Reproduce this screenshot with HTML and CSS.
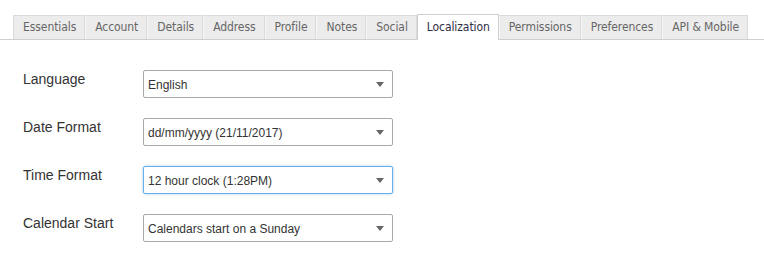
FILE: index.html
```html
<!DOCTYPE html>
<html>
<head>
<meta charset="utf-8">
<link rel="stylesheet" href="styles.css">
</head>
<body>
<div class="tabbar">
  <div class="tab">Essentials</div>
  <div class="tab">Account</div>
  <div class="tab">Details</div>
  <div class="tab">Address</div>
  <div class="tab">Profile</div>
  <div class="tab">Notes</div>
  <div class="tab">Social</div>
  <div class="tab active">Localization</div>
  <div class="tab">Permissions</div>
  <div class="tab">Preferences</div>
  <div class="tab">API &amp; Mobile</div>
</div>
<div class="form">
  <div class="row">
    <div class="label">Language</div>
    <div class="select"><span>English</span><i class="caret"></i></div>
  </div>
  <div class="row">
    <div class="label">Date Format</div>
    <div class="select"><span>dd/mm/yyyy (21/11/2017)</span><i class="caret"></i></div>
  </div>
  <div class="row">
    <div class="label">Time Format</div>
    <div class="select focus"><span>12 hour clock (1:28PM)</span><i class="caret"></i></div>
  </div>
  <div class="row">
    <div class="label">Calendar Start</div>
    <div class="select"><span>Calendars start on a Sunday</span><i class="caret"></i></div>
  </div>
</div>
</body>
</html>
```
FILE: styles.css
```css
html, body {
  margin: 0;
  padding: 0;
  background: #fff;
}
.tabbar {
  display: flex;
  padding: 15px 0 0 13px;
  border-bottom: 1px solid #cfcfcf;
}
.tab {
  white-space: nowrap;
  font-family: "DejaVu Sans Condensed", "DejaVu Sans", sans-serif;
  font-stretch: condensed;
  font-size: 12px;
  letter-spacing: -0.08px;
  line-height: 14px;
  color: #666;
  background: #ececec;
  border: 1px solid #dadada;
  border-bottom: none;
  border-left-color: #f7f7f7;
  padding: 4px 8px 5px 9px;
}
.tab:first-child {
  border-left-color: #dadada;
}
.tab.active {
  background: #fff;
  color: #2e2e44;
  border-color: #cfcfcf;
  margin-top: -1px;
  padding-top: 5px;
  margin-bottom: -1px;
  padding-bottom: 5px;
}
.form {
  display: flex;
  flex-direction: column;
  gap: 20px;
  padding: 30px 0 0 23px;
}
.row {
  display: flex;
  align-items: flex-start;
}
.label {
  width: 120px;
  font-family: "Liberation Sans", Arial, sans-serif;
  font-size: 14px;
  line-height: 16px;
  padding-top: 1px;
  color: #333;
}
.select {
  box-sizing: border-box;
  width: 250px;
  height: 28px;
  border: 1px solid #a9a9a9;
  border-radius: 2px;
  display: flex;
  align-items: center;
  justify-content: space-between;
  padding: 1px 8px 0 4px;
  font-family: "Liberation Sans", Arial, sans-serif;
  font-size: 12px;
  color: #333;
}
.select.focus {
  border-color: #66afe9;
  box-shadow: 0 0 3px rgba(102, 175, 233, 0.6);
}
.caret {
  width: 0;
  height: 0;
  border-left: 4px solid transparent;
  border-right: 4px solid transparent;
  border-top: 5px solid #666;
}
```
